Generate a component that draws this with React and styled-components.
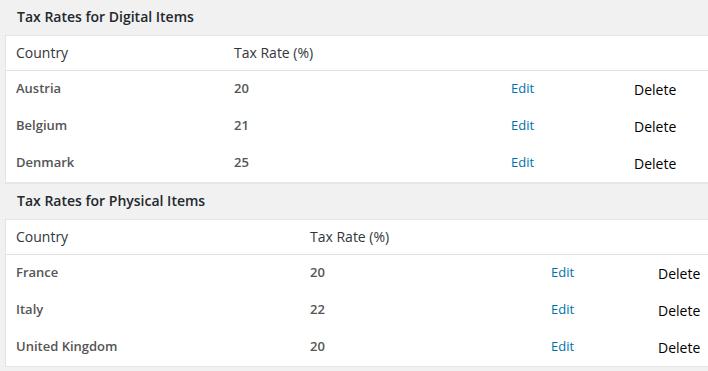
import React from 'react'
import styled, { createGlobalStyle } from 'styled-components'

const GlobalStyle = createGlobalStyle`
  html, body {
    margin: 0;
    padding: 0;
    background: #f1f1f1;
    font-family: "Open Sans", "Noto Sans", sans-serif;
    overflow: hidden;
  }
`

const Page = styled.div`
  display: flex;
  flex-direction: column;
  padding-left: 5px;
`

const Heading = styled.h2`
  margin: 0;
  padding-left: 12px;
  height: ${({ first }) => (first ? '35px' : '36px')};
  line-height: ${({ first }) => (first ? '34px' : '36px')};
  font-size: 14px;
  font-weight: 600;
  color: #23282d;
`

const Panel = styled.div`
  background: #fff;
  border: 1px solid #e5e5e5;
  border-right: none;
  box-shadow: 0 1px 1px rgba(0, 0, 0, 0.04);
`

const Row = styled.div`
  display: grid;
  grid-template-columns: ${({ cols }) => cols};
  align-items: center;
  box-sizing: border-box;
  height: ${({ head }) => (head ? '35px' : '37px')};
  padding-bottom: ${({ head }) => (head ? '2px' : '3px')};
  border-bottom: ${({ head }) => (head ? '1px solid #e1e1e1' : 'none')};
`

const Cell = styled.div`
  padding: 0 10px;
  font-size: ${({ head }) => (head ? '14px' : '13px')};
  font-weight: ${({ head }) => (head ? 400 : 600)};
  color: ${({ head }) => (head ? '#32373c' : '#555')};
  white-space: nowrap;
`

const EditLink = styled.a`
  padding: 0 10px;
  font-size: 13px;
  color: #0073aa;
  text-decoration: none;
  cursor: pointer;
`

const DeleteButton = styled.button`
  justify-self: start;
  margin: 3px 0 0 10px;
  padding: 0;
  border: none;
  background: none;
  font-family: "Open Sans", "Noto Sans", sans-serif;
  font-size: 14px;
  color: #000;
  cursor: pointer;
`

const TaxTable = ({ title, cols, rates, first }) => (
  <>
    <Heading first={first}>{title}</Heading>
    <Panel>
      <Row head cols={cols}>
        <Cell head>Country</Cell>
        <Cell head>Tax Rate (%)</Cell>
        <div />
        <div />
      </Row>
      {rates.map(([country, rate]) => (
        <Row key={country} cols={cols}>
          <Cell>{country}</Cell>
          <Cell>{rate}</Cell>
          <EditLink>Edit</EditLink>
          <DeleteButton>Delete</DeleteButton>
        </Row>
      ))}
    </Panel>
  </>
)

export default function App() {
  return (
    <Page>
      <GlobalStyle />
      <TaxTable
        first
        title="Tax Rates for Digital Items"
        cols="218px 277px 123px 1fr"
        rates={[['Austria', 20], ['Belgium', 21], ['Denmark', 25]]}
      />
      <TaxTable
        title="Tax Rates for Physical Items"
        cols="294px 241px 107px 1fr"
        rates={[['France', 20], ['Italy', 22], ['United Kingdom', 20]]}
      />
    </Page>
  )
}
